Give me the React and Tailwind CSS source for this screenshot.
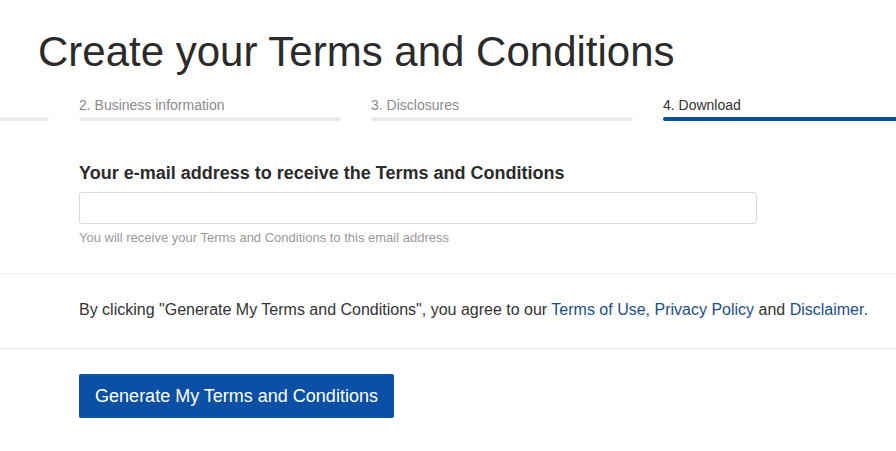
import React from "react";

const steps = [
  { label: "", active: false },
  { label: "2. Business information", active: false },
  { label: "3. Disclosures", active: false },
  { label: "4. Download", active: true },
];

export default function App() {
  return (
    <div
      className="w-[896px] h-[451px] overflow-hidden bg-white text-[#333]"
      style={{ fontFamily: '"Liberation Sans", Arial, sans-serif' }}
    >
      <h1 className="pl-[38px] pt-[28px] text-[42px] leading-[48px] text-[#2b2b2b] whitespace-nowrap">
        Create your Terms and Conditions
      </h1>

      {/* stepper */}
      <div className="flex gap-[30px] ml-[-213px] mt-[21px]">
        {steps.map((s, i) => (
          <div key={i} className="w-[262px] shrink-0">
            <div
              className={`h-[16px] text-[14px] leading-[16px] whitespace-nowrap ${
                s.active ? "text-[#333]" : "text-[#8a8a8a]"
              }`}
            >
              {s.label}
            </div>
            <div
              className={`mt-[4px] h-[4px] rounded-full ${
                s.active ? "bg-[#0b4e98] w-[300px]" : "bg-[#ebebeb]"
              }`}
            />
          </div>
        ))}
      </div>

      <div className="px-[79px] pt-[41px]">
        <label className="block text-[18px] leading-[22px] font-bold text-[#2b2b2b] whitespace-nowrap">
          Your e-mail address to receive the Terms and Conditions
        </label>
        <input
          type="email"
          className="block mt-[8px] w-[678px] h-[32px] border border-[#dadada] rounded-[3px] px-3 outline-none"
        />
        <p className="mt-[6px] text-[13px] leading-[16px] text-[#999] whitespace-nowrap">
          You will receive your Terms and Conditions to this email address
        </p>
      </div>

      <div className="mt-[27px] border-t border-[#ececec]" />

      <p className="pl-[79px] pt-[26px] pb-[28px] text-[16px] leading-[20px] text-[#333] whitespace-nowrap">
        By clicking "Generate My Terms and Conditions", you agree to our{" "}
        <a href="#" className="text-[#1b4f8a]">Terms of Use</a>
        <span className="text-[#1b4f8a]">,</span>{" "}
        <a href="#" className="text-[#1b4f8a]">Privacy Policy</a> and{" "}
        <a href="#" className="text-[#1b4f8a]">Disclaimer</a>
        <span className="text-[#1b4f8a]">.</span>
      </p>

      <div className="border-t border-[#ececec]" />

      <div className="px-[79px] pt-[25px]">
        <button className="h-[44px] w-[315px] bg-[#0b50a4] text-white text-[18px] rounded-[2px] whitespace-nowrap">
          Generate My Terms and Conditions
        </button>
      </div>
    </div>
  );
}
